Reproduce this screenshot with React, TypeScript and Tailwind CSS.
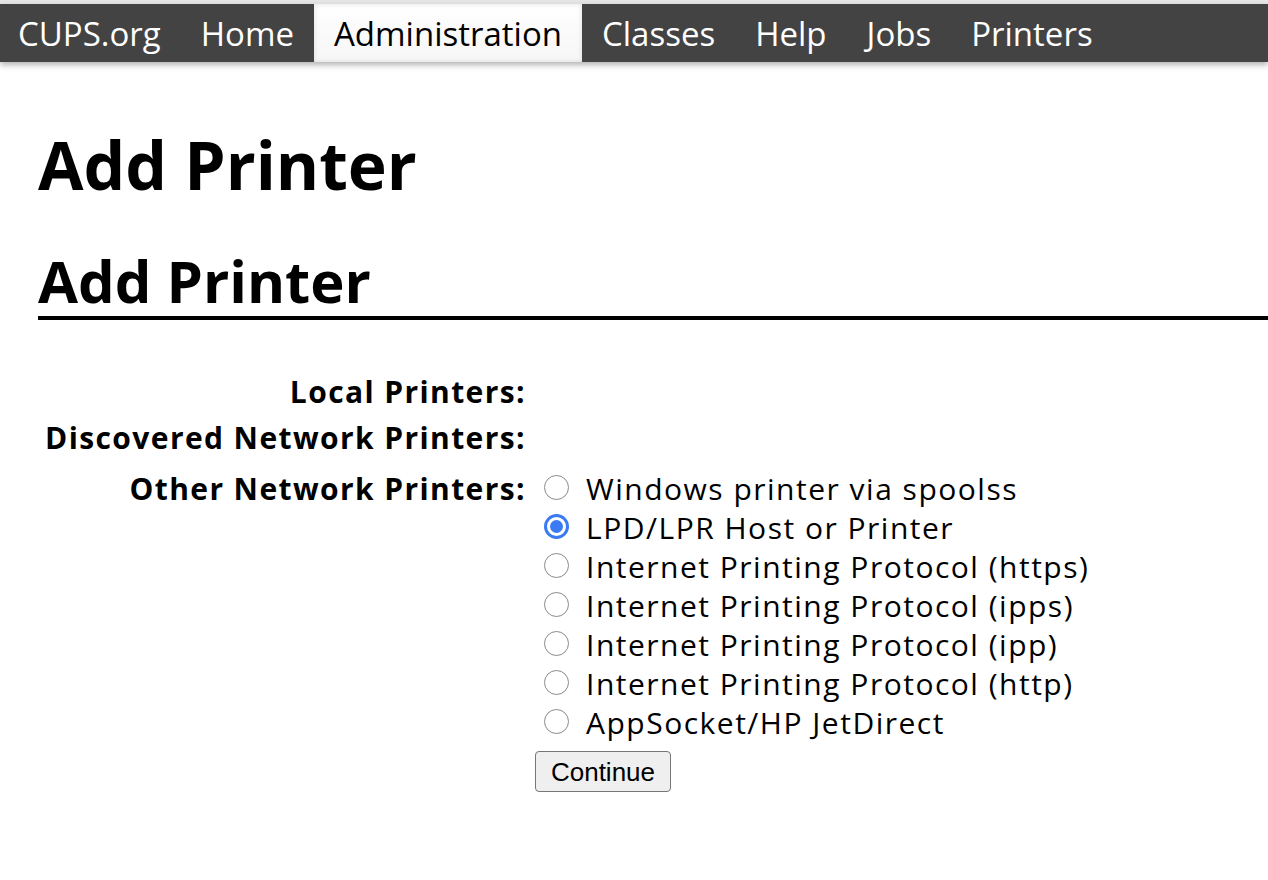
import React from "react";

const navItems = ["CUPS.org", "Home", "Administration", "Classes", "Help", "Jobs", "Printers"];

const options = [
  "Windows printer via spoolss",
  "LPD/LPR Host or Printer",
  "Internet Printing Protocol (https)",
  "Internet Printing Protocol (ipps)",
  "Internet Printing Protocol (ipp)",
  "Internet Printing Protocol (http)",
  "AppSocket/HP JetDirect",
];

function Radio({ checked }: { checked: boolean }) {
  if (checked) {
    return (
      <span className="ml-[9px] mt-[-3px] flex h-[25px] w-[25px] shrink-0 items-center justify-center rounded-full border-[3px] border-[#3a7af3] bg-white">
        <span className="h-[13px] w-[13px] rounded-full bg-[#3a7af3]" />
      </span>
    );
  }
  return (
    <span className="ml-[9px] mt-[-3px] block h-[25px] w-[25px] shrink-0 rounded-full border-[1.5px] border-[#8a8a8a] bg-white" />
  );
}

export default function App() {
  return (
    <div
      className="min-h-[880px] bg-white text-black"
      style={{ fontFamily: '"Open Sans", "Noto Sans", sans-serif' }}
    >
      <div className="h-[4px] bg-[#e6e6e6]" />
      <nav className="flex h-[58px] bg-[#434343] shadow-[0_3px_6px_rgba(0,0,0,0.3)]">
        {navItems.map((item, i) => {
          const active = item === "Administration";
          return (
            <div
              key={item}
              className={
                "flex h-full items-center text-[33px] leading-none " +
                (i === 0 ? "pl-[18px] pr-[20px] " : "px-[20px] ") +
                (active
                  ? "bg-gradient-to-b from-white to-[#f6f6f6] text-black shadow-[inset_0_0_5px_rgba(0,0,0,0.12)]"
                  : "text-white")
              }
            >
              {item}
            </div>
          );
        })}
      </nav>

      <main className="pl-[38px]">
        <h1 className="mt-[69px] text-[66px] font-bold leading-[66px]">Add Printer</h1>
        <h2 className="mt-[55px] border-b-[4px] border-black pb-[6px] text-[58px] font-bold leading-[58px]">
          Add Printer
        </h2>

        <div className="mt-[52px] grid grid-cols-[488px_1fr] text-[30px] leading-[39px]">
          <div className="h-[46px] text-right font-bold tracking-[1.4px]">Local Printers:</div>
          <div />
          <div className="h-[51px] text-right font-bold tracking-[1.4px]">Discovered Network Printers:</div>
          <div />
          <div className="text-right font-bold tracking-[1.4px]">Other Network Printers:</div>
          <div className="pl-[9px]">
            {options.map((o, i) => (
              <div key={o} className="flex h-[39px] items-center">
                <Radio checked={i === 1} />
                <span className="ml-[17px] whitespace-nowrap tracking-[1.5px]">{o}</span>
              </div>
            ))}
            <button
              className="mt-[9px] h-[41px] w-[136px] rounded-[4px] border border-[#767676] bg-[#efefef] text-[26px] leading-none text-black"
              style={{ fontFamily: '"Liberation Sans", Arial, sans-serif' }}
            >
              Continue
            </button>
          </div>
        </div>
      </main>
    </div>
  );
}
